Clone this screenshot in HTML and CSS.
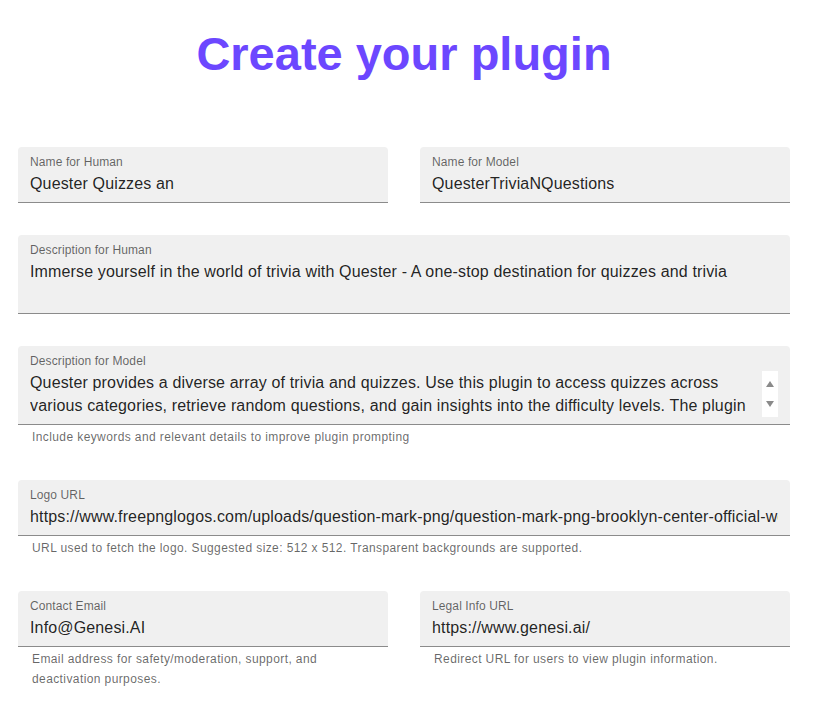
FILE: index.html
```html
<!DOCTYPE html>
<html lang="en">
<head>
<meta charset="utf-8">
<title>Create your plugin</title>
<link rel="stylesheet" href="styles.css">
</head>
<body>
<main class="page">
  <h1 class="title">Create your plugin</h1>
  <form class="form">
    <div class="row">
      <div class="group">
        <div class="field">
          <div class="label">Name for Human</div>
          <div class="value">Quester Quizzes an</div>
        </div>
      </div>
      <div class="group">
        <div class="field">
          <div class="label">Name for Model</div>
          <div class="value">QuesterTriviaNQuestions</div>
        </div>
      </div>
    </div>

    <div class="group">
      <div class="field">
        <div class="label">Description for Human</div>
        <div class="value multi">Immerse yourself in the world of trivia with Quester - A one-stop destination for quizzes and trivia</div>
      </div>
    </div>

    <div class="group">
      <div class="field">
        <div class="label">Description for Model</div>
        <div class="textarea">
          <div class="value lines">
            <span class="line">Quester provides a diverse array of trivia and quizzes. Use this plugin to access quizzes across</span>
            <span class="line">various categories, retrieve random questions, and gain insights into the difficulty levels. The plugin</span>
          </div>
          <div class="scrollbar">
            <span class="arrow up"></span>
            <span class="arrow down"></span>
          </div>
        </div>
      </div>
      <p class="helper">Include keywords and relevant details to improve plugin prompting</p>
    </div>

    <div class="group">
      <div class="field">
        <div class="label">Logo URL</div>
        <div class="value clip">https://www.freepnglogos.com/uploads/question-mark-png/question-mark-png-brooklyn-center-official-website-11.png</div>
      </div>
      <p class="helper">URL used to fetch the logo. Suggested size: 512 x 512. Transparent backgrounds are supported.</p>
    </div>

    <div class="row">
      <div class="group">
        <div class="field">
          <div class="label">Contact Email</div>
          <div class="value">Info@Genesi.AI</div>
        </div>
        <p class="helper">Email address for safety/moderation, support, and deactivation purposes.</p>
      </div>
      <div class="group">
        <div class="field">
          <div class="label">Legal Info URL</div>
          <div class="value">https://www.genesi.ai/</div>
        </div>
        <p class="helper">Redirect URL for users to view plugin information.</p>
      </div>
    </div>
  </form>
</main>
</body>
</html>
```

FILE: styles.css
```css
html, body {
  margin: 0;
  padding: 0;
  background: #ffffff;
}

body {
  font-family: "Liberation Sans", Arial, Helvetica, sans-serif;
  color: rgba(0, 0, 0, 0.87);
}

.page {
  padding: 0 23px 0 18px;
}

.title {
  margin: 27px 0 66px;
  font-family: "Liberation Sans", Arial, Helvetica, sans-serif;
  font-weight: 700;
  font-size: 47px;
  line-height: 54px;
  text-align: center;
  color: #6c47ff;
}

.form {
  display: flex;
  flex-direction: column;
  gap: 32px;
}

.row {
  display: grid;
  grid-template-columns: 1fr 1fr;
  gap: 32px;
}

.group {
  min-width: 0;
}

.field {
  background: #f0f0f0;
  border-radius: 4px 4px 0 0;
  border-bottom: 1px solid rgba(0, 0, 0, 0.42);
  padding: 7px 12px 7px;
}

.label {
  font-size: 12px;
  line-height: 17px;
  letter-spacing: 0.11px;
  color: rgba(0, 0, 0, 0.6);
  white-space: nowrap;
}

.value {
  margin-top: 1px;
  font-size: 16px;
  line-height: 23px;
  letter-spacing: 0.15px;
  color: rgba(0, 0, 0, 0.87);
  white-space: nowrap;
}

.value.multi {
  height: 46px;
}

.value.clip {
  overflow: hidden;
}

.textarea {
  display: flex;
  margin-top: 1px;
}

.value.lines {
  margin-top: 0;
  flex: 1;
  height: 46px;
  overflow: hidden;
}

.line {
  display: block;
}

.scrollbar {
  width: 16px;
  height: 46px;
  background: #ffffff;
  display: flex;
  flex-direction: column;
  align-items: center;
  justify-content: center;
  gap: 14px;
}

.arrow {
  width: 0;
  height: 0;
  border-left: 4px solid transparent;
  border-right: 4px solid transparent;
}

.arrow.up {
  border-bottom: 6px solid #8a8a8a;
}

.arrow.down {
  border-top: 6px solid #8a8a8a;
}

.helper {
  margin: 3px 14px 0;
  font-size: 12px;
  line-height: 19.92px;
  letter-spacing: 0.4px;
  color: rgba(0, 0, 0, 0.6);
}
```
